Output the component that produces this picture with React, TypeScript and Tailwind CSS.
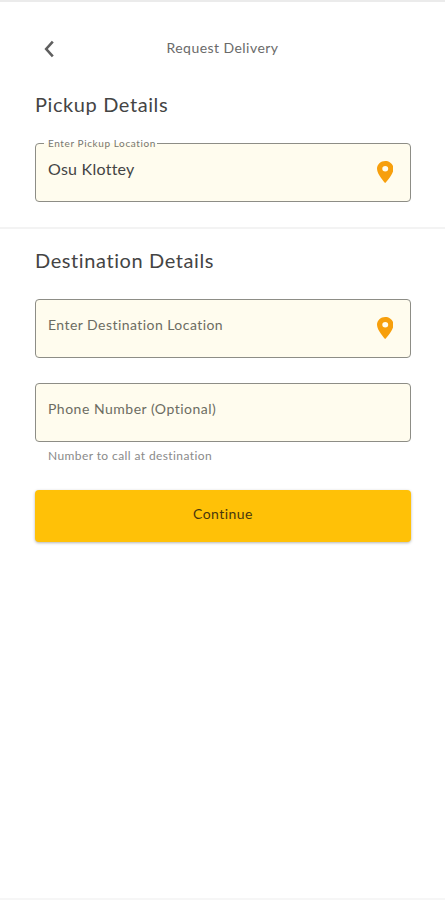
import { useState } from "react";

type FieldProps = {
  label: string;
  inputClass: string;
  defaultValue?: string;
  hasPin?: boolean;
};

function ChevronLeftIcon() {
  return (
    <svg
      width="10"
      height="18"
      viewBox="0 0 10 18"
      fill="none"
      stroke="#5f5f5f"
      strokeWidth="2.6"
    >
      <path d="M8.8 1.7 2.2 9l6.6 7.3" />
    </svg>
  );
}

function PinIcon() {
  return (
    <svg
      width="16.5"
      height="22"
      viewBox="5 2 14 20"
      preserveAspectRatio="none"
      fill="#f79f0c"
      className="mb-[2px]"
    >
      <path d="M12 2C8.13 2 5 5.13 5 9c0 5.25 7 13 7 13s7-7.75 7-13c0-3.87-3.13-7-7-7zm0 9.5a2.5 2.5 0 0 1 0-5 2.5 2.5 0 0 1 0 5z" />
    </svg>
  );
}

function OutlinedField({ label, inputClass, defaultValue, hasPin }: FieldProps) {
  const [value, setValue] = useState(defaultValue ?? "");
  const floating = value !== "";

  return (
    <div className="relative flex h-[59px] items-center rounded-[4px] border border-[#8d8d86] bg-[#fffcee] pr-[17px] pl-3">
      {floating && (
        <span className="absolute -top-[9px] left-[8px] flex h-4 items-center bg-linear-to-b from-white from-50% to-[#fffcee] to-50% pr-[1px] pl-[4px] text-[10px] leading-none tracking-[0.6px] text-[#77776f]">
          {label}
        </span>
      )}
      <input
        aria-label={label}
        placeholder={floating ? undefined : label}
        value={value}
        onChange={(e) => setValue(e.target.value)}
        className={`mb-[8px] min-w-0 flex-1 bg-transparent outline-none placeholder:text-[#6c6c62] placeholder:opacity-100 ${inputClass}`}
      />
      {hasPin && <PinIcon />}
    </div>
  );
}

export default function App() {
  return (
    <main className="flex h-screen flex-col border-t-2 border-b-2 border-t-[#ebebeb] border-b-[#f6f6f6] bg-white font-['Lato',sans-serif] text-[#444]">
      <header className="mt-[37px] grid h-[20px] grid-cols-[1fr_auto_1fr] items-center">
        <button type="button" aria-label="Back" className="pl-[44px]">
          <ChevronLeftIcon />
        </button>
        <h1 className="-mt-[3px] text-[14px] leading-5 tracking-[0.45px] text-[#6a6a6a]">
          Request Delivery
        </h1>
      </header>

      <section className="mt-[33px] border-b-2 border-[#f3f3f3] pr-[34px] pb-[25px] pl-[35px]">
        <h2 className="mb-[26px] text-[20px] leading-[25px] tracking-[0.6px]">
          Pickup Details
        </h2>
        <OutlinedField
          label="Enter Pickup Location"
          defaultValue="Osu Klottey"
          inputClass="text-[16px] tracking-[0.25px]"
          hasPin
        />
      </section>

      <section className="mt-[19px] pr-[34px] pl-[35px]">
        <h2 className="mb-[26px] text-[20px] leading-[25px] tracking-[0.6px]">
          Destination Details
        </h2>
        <OutlinedField
          label="Enter Destination Location"
          inputClass="text-[14px] tracking-[0.45px]"
          hasPin
        />
        <div className="mt-[25px]">
          <OutlinedField
            label="Phone Number (Optional)"
            inputClass="text-[14px] tracking-[0.5px]"
          />
        </div>
        <p className="mt-[6px] pl-[13px] text-[12px] leading-4 tracking-[0.4px] text-[#8a8a8a]">
          Number to call at destination
        </p>
        <button
          type="button"
          className="mt-[26px] h-[52px] w-full rounded-[4px] bg-[#ffc107] pb-[5px] text-[14px] tracking-[0.45px] text-[#49370d] shadow-[0_1px_3px_rgba(0,0,0,0.3)]"
        >
          Continue
        </button>
      </section>
    </main>
  );
}
